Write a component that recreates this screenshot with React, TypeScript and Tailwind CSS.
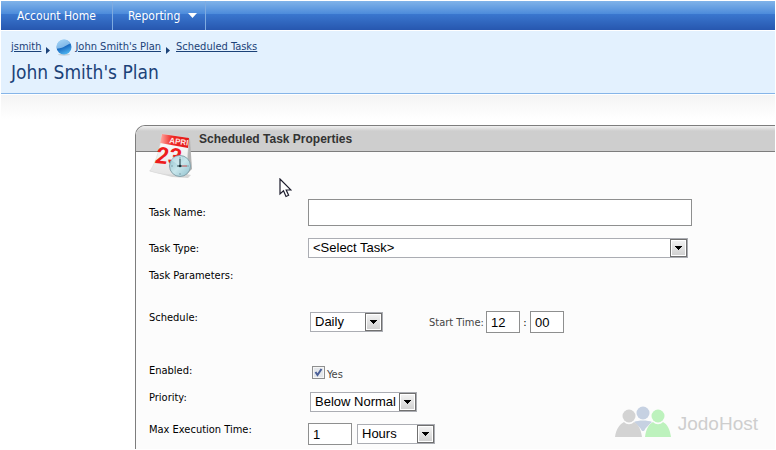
import React, { useState } from 'react';

interface SelectBoxProps {
  id: string;
  label?: string;
  options: string[];
  className: string;
}

const SelectBox: React.FC<SelectBoxProps> = ({ id, label, options, className }) => (
  <div className={`relative h-5 ${className}`}>
    <select
      id={id}
      aria-label={label}
      className="block h-full w-full appearance-none border border-[#abadb3] bg-white pl-1 pr-[18px] font-[Liberation_Sans,Arial,sans-serif] text-[13px] leading-[18px] text-black"
    >
      {options.map((option) => (
        <option key={option}>{option}</option>
      ))}
    </select>
    <span className="pointer-events-none absolute inset-y-px right-px flex w-[17px] items-center justify-center border border-[#707070] bg-linear-to-b from-[#f4f4f4] to-[#cfcfcf] shadow-[inset_0_0_0_1px_#fff]">
      <svg width="7" height="4" viewBox="0 0 7 4" shapeRendering="crispEdges">
        <path d="M0 0h7v1H0zM1 1h5v1H1zM2 2h3v1H2zM3 3h1v1H3z" />
      </svg>
    </span>
  </div>
);

interface TextBoxProps {
  id: string;
  label?: string;
  initial?: string;
  className: string;
}

const TextBox: React.FC<TextBoxProps> = ({ id, label, initial = '', className }) => {
  const [value, setValue] = useState(initial);
  return (
    <input
      id={id}
      type="text"
      aria-label={label}
      value={value}
      onChange={(e) => setValue(e.target.value)}
      className={`block border border-[#8e8f8f] bg-white pl-1 font-[Liberation_Sans,Arial,sans-serif] text-[13px] text-black ${className}`}
    />
  );
};

const CrumbArrow = () => (
  <svg width="4" height="7" viewBox="0 0 4 7" className="mt-[6px]" fill="#1b4278">
    <path d="M0 0L4 3.5L0 7z" />
  </svg>
);

const PlanIcon = () => (
  <svg width="16" height="17" viewBox="0 0 16 17">
    <defs>
      <linearGradient id="orb" x1="0.3" y1="0" x2="0.7" y2="1">
        <stop offset="0" stopColor="#8ecbf5" />
        <stop offset="0.5" stopColor="#1a6cc2" />
        <stop offset="1" stopColor="#55bdf5" />
      </linearGradient>
    </defs>
    <ellipse cx="8" cy="15.5" rx="6" ry="1.2" fill="#c3d0da" />
    <circle cx="8" cy="8" r="7.5" fill="url(#orb)" />
    <path d="M.6 9.500A7.500 7.500 0 0 1 14.600 4.600C11 5 8 10 .6 9.500z" fill="#a9d6f6" opacity=".7" />
  </svg>
);

const CalendarIcon = () => (
  <svg width="46" height="46" viewBox="0 0 46 46">
    <defs>
      <linearGradient id="paper" x1="0" y1="0" x2="0" y2="1">
        <stop offset="0" stopColor="#ffffff" />
        <stop offset="1" stopColor="#e4e4e4" />
      </linearGradient>
      <linearGradient id="red" x1="0" y1="0" x2="1" y2="0">
        <stop offset="0" stopColor="#ffb0a8" />
        <stop offset="0.4" stopColor="#f02a26" />
        <stop offset="1" stopColor="#e01818" />
      </linearGradient>
      <linearGradient id="clock" x1="0" y1="0" x2="1" y2="1">
        <stop offset="0" stopColor="#8fc0cd" />
        <stop offset="0.5" stopColor="#c8e6ec" />
        <stop offset="1" stopColor="#8fc0cd" />
      </linearGradient>
    </defs>
    <path d="M1 38L8 34L43 42L40 45L24 44z" fill="#d6d6d6" />
    <path d="M39 4L42 6L44 36L38 42z" fill="#b3b3b3" />
    <path d="M14 1L41 5L38 42C25 42 14 42 2 38C9 27 12 14 14 1z" fill="url(#paper)" stroke="#d8d8d8" strokeWidth=".5" />
    <path d="M14 1L41 5L40 15L12 10z" fill="url(#red)" />
    <text x="21" y="10" transform="rotate(8 21 10)" className="font-[Liberation_Sans,Arial,sans-serif] text-[8px] font-bold" fill="#ffe6e4">APRI</text>
    <text x="7" y="30" transform="rotate(5 7 30)" className="font-[Roboto,Liberation_Sans,sans-serif] text-[23px] font-bold italic" fill="#ee1c1c">23</text>
    <circle cx="32" cy="33" r="10.500" fill="url(#clock)" stroke="#86a3ac" />
    <path d="M32 33L23 27A10 10 0 0 1 34 23.500z" fill="#e9f8fa" opacity=".4" />
    <path d="M32 24v2M32 40v2M23 33h2M39 33h2" stroke="#7fa0aa" />
    <path d="M32 26v7M29 33h5" stroke="#35525b" strokeWidth="1.200" />
    <path d="M34 33h5" stroke="#c0494a" />
    <circle cx="32" cy="33" r="1.300" fill="#1d3138" />
  </svg>
);

const PeopleLogo = () => (
  <svg width="56" height="32" viewBox="0 0 56 32">
    <g fill="#c6d1e2">
      <circle cx="28" cy="7" r="6.500" />
      <path d="M19 16C23 14 33 14 37 16C34 19 31 21 29 25H27C25 21 22 19 19 16z" />
    </g>
    <g fill="#d3d3d3">
      <circle cx="14" cy="10" r="6.500" />
      <path d="M0 31C1 23 5 18 9 16C12 19 16 19 19 16C23 18 26 23 27 31z" />
    </g>
    <g fill="#bdf2bd">
      <circle cx="43" cy="10" r="6.500" />
      <path d="M30 31C31 23 34 18 38 16C41 19 45 19 48 16C52 18 55 23 56 31z" />
    </g>
  </svg>
);

const App: React.FC = () => {
  const [enabled, setEnabled] = useState(true);

  return (
    <div className="relative flex min-h-screen flex-col overflow-hidden bg-white p-px font-[DejaVu_Sans_Condensed,Noto_Sans,sans-serif] text-[11px]">
      <nav className="flex h-[29px] bg-[linear-gradient(#80b3e9,#4c8bdb_45%,#3a77cf_45%,#2757af)] text-[12px] text-white">
        <a href="#home" className="flex items-center border-r border-[#7fabe0] px-4">Account Home</a>
        <button type="button" className="flex items-center gap-2 border-r border-[#7fabe0] pl-[15px] pr-2">
          Reporting
          <svg width="9" height="5" viewBox="0 0 9 5" fill="#fff">
            <path d="M0 0h9L4.500 5z" />
          </svg>
        </button>
      </nav>

      <header className="mt-px h-[63px] border-b border-[#86b5e8] bg-[#e3f1fe] px-[10px] pt-2 text-[#1b4278]">
        <div className="flex h-4 items-center leading-4">
          <a href="#jsmith" className="mr-[5px] underline">jsmith</a>
          <CrumbArrow />
          <span className="ml-[6px] mr-[3px]"><PlanIcon /></span>
          <a href="#plan" className="mr-[5px] underline">John Smith's Plan</a>
          <CrumbArrow />
          <a href="#tasks" className="ml-[6px] underline">Scheduled Tasks</a>
        </div>
        <h1 className="mt-[5px] text-[19px] leading-6">John Smith's Plan</h1>
      </header>

      <main className="mt-px flex flex-1 flex-col">
        <div className="h-[30px] bg-linear-to-b from-[#f4f4f4] to-white to-80%" />
        <section className="relative ml-[134px] flex-1 rounded-tl-[10px] border-l border-t border-[#7d7d7d] bg-[#fcfcfc]">
          <h2 className="flex h-[26px] items-center rounded-tl-[9px] border-b border-[#7d7d7d] bg-linear-to-b from-[#f0f0f0] to-[#cecece] to-20% pl-[63px] font-[Liberation_Sans,Arial,sans-serif] text-[12px] font-bold text-[#333]">
            Scheduled Task Properties
          </h2>
          <div className="absolute left-3 top-[7px]">
            <CalendarIcon />
          </div>
          {/* mouse pointer */}
          <svg className="absolute left-[143px] top-[52px]" width="13" height="20" viewBox="0 0 13 20">
            <path d="M1 1v15l3.500-3.200L7 18.500l2.600-1.200L7.200 12H12z" fill="#fff" stroke="#1c1c2c" strokeWidth="1.200" />
          </svg>

          <form className="pb-1 pl-[13px] pt-[47px] text-black">
            <div className="flex items-center">
              <label htmlFor="name" className="w-[159px] pt-0.5">Task Name:</label>
              <TextBox id="name" className="h-[27px] w-[384px]" />
            </div>
            <div className="mt-3 flex items-center">
              <label htmlFor="type" className="w-[159px] pt-0.5">Task Type:</label>
              <SelectBox id="type" options={['<Select Task>']} className="w-[380px]" />
            </div>
            <div className="mt-2 leading-5">Task Parameters:</div>

            <div className="mt-[25px] flex h-[22px] items-center">
              <label htmlFor="schedule" className="w-[161px] self-start leading-[14px]">Schedule:</label>
              <SelectBox id="schedule" options={['Daily', 'Weekly', 'Monthly']} className="w-[73px]" />
              <label htmlFor="hour" className="ml-[46px] w-[57px] pt-0.5 text-[#444]">Start Time:</label>
              <TextBox id="hour" initial="12" className="h-[22px] w-[34px]" />
              <span className="w-[10px] pt-0.5 text-center">:</span>
              <TextBox id="minute" label="Start minute" initial="00" className="h-[22px] w-[34px]" />
            </div>

            <div className="mt-[31px] flex h-4 items-center">
              <span className="w-[163px] self-start leading-[14px]">Enabled:</span>
              <label className="flex items-center gap-[2px] text-[#444]">
                <span className="relative">
                  <input
                    type="checkbox"
                    checked={enabled}
                    onChange={(e) => setEnabled(e.target.checked)}
                    className="block size-[13px] appearance-none border border-[#8e8f8f] bg-[#e4e7eb] shadow-[inset_0_0_0_1px_#f6f6f6]"
                  />
                  {enabled && (
                    <svg className="pointer-events-none absolute inset-0" width="13" height="13" viewBox="0 0 13 13">
                      <path d="M3.500 6L5.500 9L9.500 3" fill="none" stroke="#4a5f97" strokeWidth="2" />
                    </svg>
                  )}
                </span>
                <span className="pt-1.5">Yes</span>
              </label>
            </div>

            <div className="mt-[11px] flex h-[22px] items-center">
              <label htmlFor="priority" className="w-[161px] self-start leading-[14px]">Priority:</label>
              <SelectBox id="priority" options={['Below Normal', 'Normal', 'High']} className="w-[107px]" />
            </div>

            <div className="mt-[10px] flex h-[22px] items-center">
              <label htmlFor="max" className="w-[159px] self-start leading-[14px]">Max Execution Time:</label>
              <TextBox id="max" initial="1" className="h-[22px] w-[44px]" />
              <SelectBox id="unit" label="Time unit" options={['Hours', 'Minutes']} className="ml-[5px] w-[78px]" />
            </div>
          </form>
        </section>
      </main>

      {/* host watermark */}
      <div className="absolute bottom-3 right-[18px] flex items-center gap-[7px]">
        <PeopleLogo />
        <span className="pt-1 font-[Liberation_Sans,Arial,sans-serif] text-[19px] leading-6 text-[#cecece]">JodoHost</span>
      </div>
    </div>
  );
};

export default App;
